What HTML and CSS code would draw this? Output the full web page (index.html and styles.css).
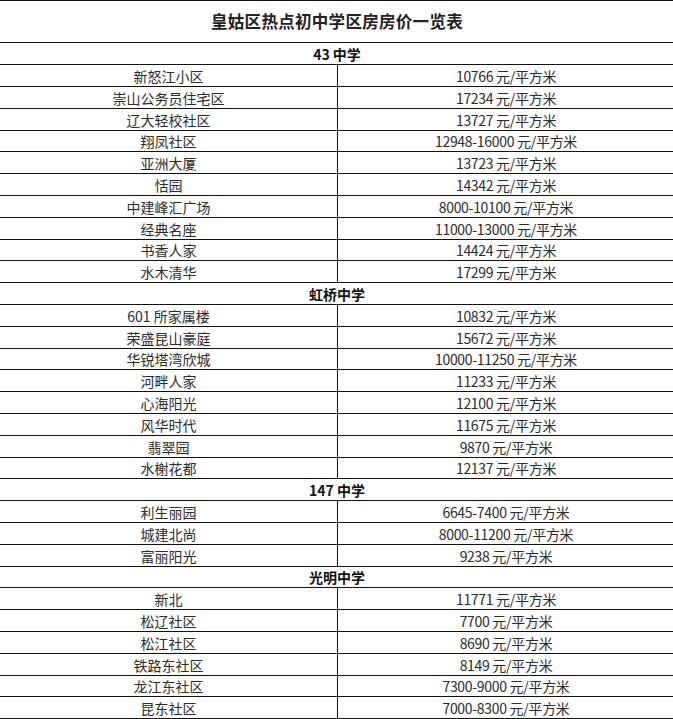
FILE: index.html
```html
<!DOCTYPE html>
<html lang="zh-CN">
<head>
<meta charset="utf-8">
<title>皇姑区热点初中学区房房价一览表</title>
<link rel="stylesheet" href="styles.css">
</head>
<body>
<table class="price-table">
  <colgroup><col class="col-name"><col class="col-price"></colgroup>
  <tbody>
    <tr class="title-row"><td colspan="2">皇姑区热点初中学区房房价一览表</td></tr>
    <tr class="section"><td colspan="2">43 中学</td></tr>
    <tr><td>新怒江小区</td><td>10766 元/平方米</td></tr>
    <tr><td>崇山公务员住宅区</td><td>17234 元/平方米</td></tr>
    <tr><td>辽大轻校社区</td><td>13727 元/平方米</td></tr>
    <tr><td>翔凤社区</td><td>12948-16000 元/平方米</td></tr>
    <tr><td>亚洲大厦</td><td>13723 元/平方米</td></tr>
    <tr><td>恬园</td><td>14342 元/平方米</td></tr>
    <tr><td>中建峰汇广场</td><td>8000-10100 元/平方米</td></tr>
    <tr><td>经典名座</td><td>11000-13000 元/平方米</td></tr>
    <tr><td>书香人家</td><td>14424 元/平方米</td></tr>
    <tr><td>水木清华</td><td>17299 元/平方米</td></tr>
    <tr class="section"><td colspan="2">虹桥中学</td></tr>
    <tr><td>601 所家属楼</td><td>10832 元/平方米</td></tr>
    <tr><td>荣盛昆山豪庭</td><td>15672 元/平方米</td></tr>
    <tr><td>华锐塔湾欣城</td><td>10000-11250 元/平方米</td></tr>
    <tr><td>河畔人家</td><td>11233 元/平方米</td></tr>
    <tr><td>心海阳光</td><td>12100 元/平方米</td></tr>
    <tr><td>风华时代</td><td>11675 元/平方米</td></tr>
    <tr><td>翡翠园</td><td>9870 元/平方米</td></tr>
    <tr><td>水榭花都</td><td>12137 元/平方米</td></tr>
    <tr class="section"><td colspan="2">147 中学</td></tr>
    <tr><td>利生丽园</td><td>6645-7400 元/平方米</td></tr>
    <tr><td>城建北尚</td><td>8000-11200 元/平方米</td></tr>
    <tr><td>富丽阳光</td><td>9238 元/平方米</td></tr>
    <tr class="section"><td colspan="2">光明中学</td></tr>
    <tr><td>新北</td><td>11771 元/平方米</td></tr>
    <tr><td>松辽社区</td><td>7700 元/平方米</td></tr>
    <tr><td>松江社区</td><td>8690 元/平方米</td></tr>
    <tr><td>铁路东社区</td><td>8149 元/平方米</td></tr>
    <tr><td>龙江东社区</td><td>7300-9000 元/平方米</td></tr>
    <tr><td>昆东社区</td><td>7000-8300 元/平方米</td></tr>
  </tbody>
</table>
</body>
</html>
```

FILE: styles.css
```css
html, body {
  margin: 0;
  padding: 0;
  background: #fff;
  overflow: hidden;
}

body {
  font-family: "Noto Sans CJK SC", "Liberation Sans", sans-serif;
  color: #2b2b2b;
}

.price-table {
  border-collapse: collapse;
  table-layout: fixed;
  width: 675px;
  margin-left: -1px;
}

.col-name { width: 338px; }
.col-price { width: 337px; }

.price-table td {
  border: 1px solid #111;
  padding: 0;
  height: 21px;
  text-align: center;
  vertical-align: middle;
  font-size: 14px;
  line-height: 16px;
  white-space: nowrap;
  overflow: hidden;
}

.price-table tr:nth-child(5n+6) td {
  height: 20px;
}

.price-table td:nth-child(2) {
  letter-spacing: -0.3px;
}

.price-table .title-row td {
  height: 40px;
  font-size: 16.5px;
  font-weight: 700;
  color: #222;
  letter-spacing: 0.3px;
  padding-bottom: 1px;
}

.price-table .section td {
  font-weight: 700;
  color: #111;
  letter-spacing: 0;
}
```
